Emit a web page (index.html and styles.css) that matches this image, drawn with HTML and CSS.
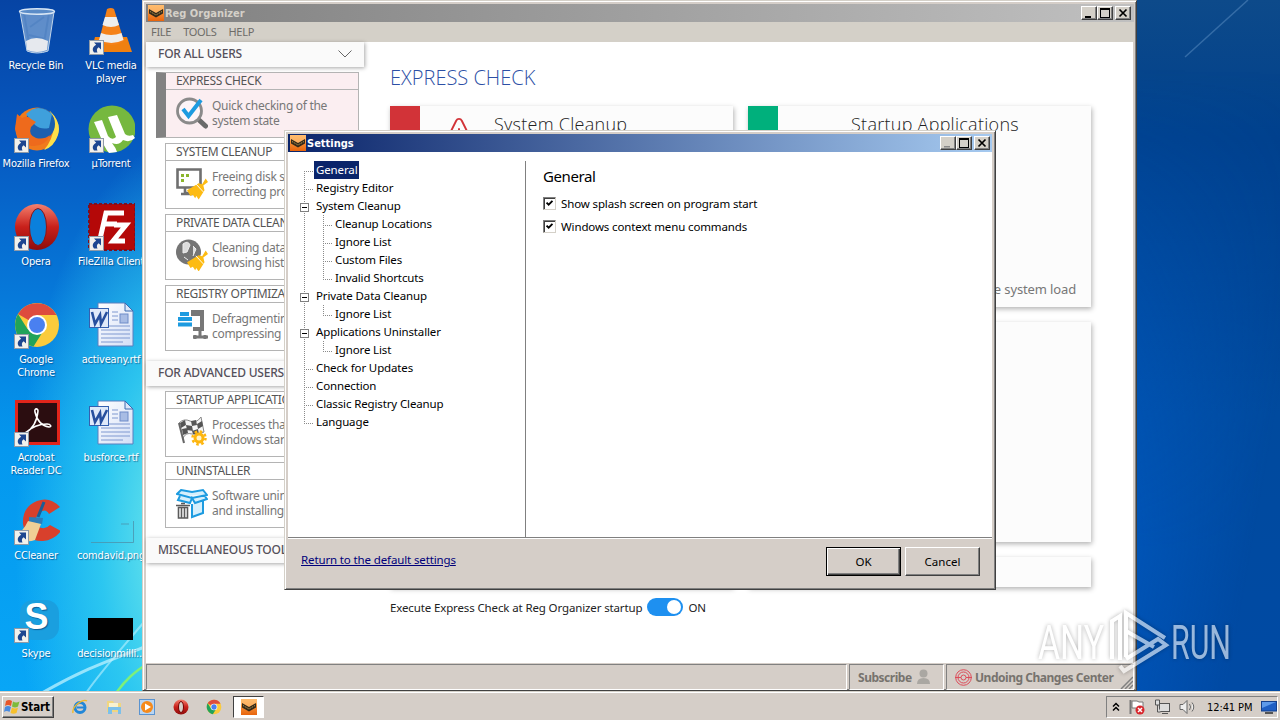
FILE: index.html
```html
<!DOCTYPE html>
<html lang="en">
<head>
    <meta charset="UTF-8">
    <meta name="viewport" content="width=device-width, initial-scale=1.0">
    <title>Reg Organizer</title>
    <link rel="stylesheet" href="styles.css">
</head>
<body>
    <!-- shared symbols -->
    <svg class="defs" width="0" height="0">
        <defs>
            <linearGradient id="orange" x1="0" y1="0" x2="0" y2="1">
                <stop offset="0" stop-color="#ffb45a"/><stop offset="1" stop-color="#e8640c"/>
            </linearGradient>
            <linearGradient id="redball" x1="0" y1="0" x2="0" y2="1">
                <stop offset="0" stop-color="#f4806e"/><stop offset=".5" stop-color="#c8201a"/><stop offset="1" stop-color="#8e0c0c"/>
            </linearGradient>
            <linearGradient id="page" x1="0" y1="0" x2="1" y2="1">
                <stop offset="0" stop-color="#fff"/><stop offset="1" stop-color="#d3def6"/>
            </linearGradient>
        </defs>
        <symbol id="shortcut" viewBox="0 0 15 15">
            <rect width="15" height="15" fill="#8f9aa8"/>
            <rect x="1" y="1" width="13" height="13" fill="#f2f1ec"/>
            <path d="M5 2.500h7v7l-2.300-2.200c-2 1.200-2.300 3-1.200 5.200H5C2.600 9.500 4 6.500 7.200 4.800z" fill="#1d4690"/>
        </symbol>
        <symbol id="app" viewBox="0 0 16 16">
            <rect width="16" height="16" fill="url(#orange)"/>
            <path d="M0 0h16v4L8 9 0 5z" fill="#ffc27a" opacity=".6"/>
            <path d="M1 4l7 4 7-4v4.500l-7 4-7-4z" fill="#33291a"/>
            <path d="M2 6.500l6 3.500 6-3.500" stroke="#d8b45a" stroke-width=".8" stroke-dasharray="1.500 1" fill="none"/>
        </symbol>
        <symbol id="chrome" viewBox="0 0 48 48">
            <circle cx="24" cy="24" r="22" fill="#fbcb3c"/>
            <path d="M24 24L5 13A22 22 0 0 1 43.500 14H24z" fill="#dd4b3e"/>
            <path d="M24 24l-9.500 4L5 13a22 22 0 0 0 15.500 32.600L29 32z" fill="#21a35a"/>
            <circle cx="24" cy="24" r="10" fill="#fff"/>
            <circle cx="24" cy="24" r="8" fill="#4a80f0"/>
        </symbol>
        <symbol id="word" viewBox="0 0 48 48">
            <path d="M11 2h27l8 8v35H11z" fill="url(#page)" stroke="#5b7fbe"/>
            <path d="M38 2v8h8z" fill="#dbe6f8" stroke="#3c6ab0"/>
            <path d="M25 11h6M25 15h6M25 19h6M14 25h29M14 29h29M14 33h29M14 37h29M14 41h22" stroke="#7e98d0"/>
            <rect x="33" y="13" width="8" height="9" fill="#a8bce4" stroke="#6f8cc8"/>
            <rect x="2.500" y="7.500" width="19" height="19" fill="#dfe9fa" stroke="#3560b0"/>
            <path d="M5 11l3 12 5-9 1 9 6-12" fill="none" stroke="#274f9e" stroke-width="2.600"/>
        </symbol>
        <symbol id="broom" viewBox="0 0 18 18">
            <path d="M16 0l2 3-4 3 1 4-5 8-2-3-1 2-2-3-2 1-3-5 10-6 3 1z" fill="#fdbb13"/>
            <path d="M7.500 4.500l6.500 7" stroke="#fff" stroke-width=".8"/>
        </symbol>
    </svg>

    <div class="desktop">
        <svg class="wallpaper" width="1280" height="692">
            <path d="M30 700C80 670 110 660 150 645" stroke="#bdf1ff" stroke-width="3" opacity=".75" fill="none"/>
            <path d="M84 696C100 672 112 660 150 615" stroke="#bdf1ff" stroke-width="2" opacity=".6" fill="none"/>
            <path d="M114 696C125 680 134 672 150 662" stroke="#7df07a" stroke-width="2.500" fill="none"/>
            <path d="M1185 57L1248 0" stroke="#5d8fc4" stroke-width="1.500" opacity=".5" fill="none"/>
        </svg>

        <div class="icons">
            <div class="icon">
                <svg viewBox="0 0 48 48">
                    <path d="M8 4h34l-6 40q-11 4-21 0z" fill="#8fb4dc" opacity=".65"/>
                    <path d="M12 6l5 30M37 6l-5 30M18 20l14-10M17 28l16 4" stroke="#4c7fc0" stroke-width="2" opacity=".6"/>
                    <path d="M14 34q10-6 22 0l-1 9q-10 4-20 0z" fill="#e6e9ee"/>
                    <ellipse cx="25" cy="4.500" rx="17.500" ry="2.800" fill="#5b8cc8" stroke="#d8e6f5" stroke-width="1.400"/>
                    <path d="M8 5l7 39q10 4 21 0l6-39" fill="none" stroke="#c3d6ea"/>
                </svg>
                <span>Recycle Bin</span>
            </div>
            <div class="icon">
                <svg viewBox="0 0 48 48">
                    <path d="M8 30h32l5 15H4z" fill="#f08010"/>
                    <path d="M20 2q4-2 7 0l10 32q-12 8-25 0z" fill="#f5821a"/>
                    <path d="M18 10h11.500l2.500 8q-8 4-16.500 0zM14 26q10 4 20.500 0l2 7q-12 6-24.500 0z" fill="#eee"/>
                    <use href="#shortcut" x="2" y="33" width="15" height="15"/>
                </svg>
                <span>VLC media player</span>
            </div>
            <div class="icon">
                <svg viewBox="0 0 48 48">
                    <circle cx="25" cy="24" r="21.500" fill="#f07a1c"/>
                    <path d="M38 6q12 12 8 24-4 12-14 15 10-12 9-24z" fill="#fde04a"/>
                    <ellipse cx="28" cy="19" rx="15" ry="16" fill="#1c5fae"/>
                    <path d="M14 9q12-12 26 0l-3 14q-8 2-14-3z" fill="#3fa0dc"/>
                    <path d="M3 24l2-15 5 4q6-3 9 1l5 3-5 5q-3 8 5 11 8 2 14-3-5 12-18 11T3 24z" fill="#ee6a1c"/>
                    <use href="#shortcut" x="2" y="33" width="15" height="15"/>
                </svg>
                <span>Mozilla Firefox</span>
            </div>
            <div class="icon">
                <svg viewBox="0 0 48 48">
                    <circle cx="25" cy="24" r="23.500" fill="#76b83f"/>
                    <path d="M7 17l8-2 6 16q4 5 8 1l-8-20 9-2 8 19q3 3 8 1l2 3q-5 5-12 2-4 6-11 3 4 5 5 9l-8 1q-5-6-8-15z" fill="#fff"/>
                    <use href="#shortcut" x="2" y="33" width="15" height="15"/>
                </svg>
                <span>µTorrent</span>
            </div>
            <div class="icon">
                <svg viewBox="0 0 48 48">
                    <ellipse cx="25" cy="24" rx="22" ry="23" fill="url(#redball)"/>
                    <ellipse cx="26" cy="24" rx="8.500" ry="18.500" fill="#0a80dc" stroke="#8e1414"/>
                    <use href="#shortcut" x="2" y="33" width="15" height="15"/>
                </svg>
                <span>Opera</span>
            </div>
            <div class="icon">
                <svg viewBox="0 0 48 48">
                    <rect x="2" y="1" width="46" height="46" fill="#b40808" stroke="#7c1020" stroke-width="2" stroke-dasharray="3 2"/>
                    <path d="M13 36l6-26h18M17 21h13M27 22h12L26 38h12" fill="none" stroke="#fff" stroke-width="5"/>
                    <use href="#shortcut" x="2" y="33" width="15" height="15"/>
                </svg>
                <span>FileZilla Client</span>
            </div>
            <div class="icon">
                <svg viewBox="0 0 48 48">
                    <use href="#chrome" x="1" y="0" width="48" height="48"/>
                    <use href="#shortcut" x="2" y="33" width="15" height="15"/>
                </svg>
                <span>Google Chrome</span>
            </div>
            <div class="icon">
                <svg viewBox="0 0 48 48"><use href="#word"/></svg>
                <span>activeany.rtf</span>
            </div>
            <div class="icon">
                <svg viewBox="0 0 48 48">
                    <rect x="4.500" y="2.500" width="42" height="42" fill="#2b0d10" stroke="#e1251b" stroke-width="3"/>
                    <path d="M13 34c8-4 12-12 13-22 0-3-4-3-3 1 2 8 6 14 14 15 3 0 2-3-2-3-7 0-14 2-22 9z" fill="none" stroke="#fff" stroke-width="1.600"/>
                    <use href="#shortcut" x="2" y="33" width="15" height="15"/>
                </svg>
                <span>Acrobat Reader DC</span>
            </div>
            <div class="icon">
                <svg viewBox="0 0 48 48"><use href="#word"/></svg>
                <span>busforce.rtf</span>
            </div>
            <div class="icon">
                <svg viewBox="0 0 48 48">
                    <path d="M48 10Q38-1 25 4 10 10 11 27q3 18 20 17 11-1 18-10l-11-6q-6 6-12 1-5-8 2-14 6-4 9 2z" fill="#d8402c"/>
                    <path d="M32 5L26 20" stroke="#1c5c94" stroke-width="3"/>
                    <path d="M17 20l14 1-1 6-13-2z" fill="#2d7cb8"/>
                    <path d="M16 24l13 3-6 16Q12 47 3 38q8-3 13-14z" fill="#f0cf96"/>
                    <use href="#shortcut" x="2" y="33" width="15" height="15"/>
                </svg>
                <span>CCleaner</span>
            </div>
            <div class="icon">
                <svg viewBox="0 0 48 48">
                    <path d="M4 45.500h42.500V24M34 27h8" fill="none" stroke="#4b93ac" opacity=".8"/>
                </svg>
                <span>comdavid.png</span>
            </div>
            <div class="icon">
                <svg viewBox="0 0 48 48">
                    <rect x="8" y="5" width="39" height="40" rx="13" fill="#1a9fdf"/>
                    <text class="skype" x="12.500" y="34">S</text>
                    <use href="#shortcut" x="2" y="33" width="15" height="15"/>
                </svg>
                <span>Skype</span>
            </div>
            <div class="icon">
                <svg viewBox="0 0 48 48"><rect x="1" y="23" width="45" height="22" fill="#000"/></svg>
                <span>decisionmilli...</span>
            </div>
        </div>

        <div class="window main-window">
            <div class="titlebar inactive">
                <svg class="app-icon" viewBox="0 0 16 16"><use href="#app"/></svg>
                <span class="title">Reg Organizer</span>
                <div class="controls">
                    <i><svg viewBox="0 0 14 12"><path d="M3 9h6v2H3z"/></svg></i>
                    <i><svg viewBox="0 0 14 12"><path d="M2 1h10v10H2zM3 3v7h8V3z" fill-rule="evenodd"/></svg></i>
                    <i class="close"><svg viewBox="0 0 14 12"><path d="M3.500 2.500l7 7M10.500 2.500l-7 7" stroke="#000" stroke-width="1.700"/></svg></i>
                </div>
            </div>
            <div class="menu"><span>FILE</span><span>TOOLS</span><span>HELP</span></div>

            <div class="main">
                <div class="sidebar">
                    <div class="group">FOR ALL USERS
                        <svg width="14" height="8" viewBox="0 0 14 8"><path d="M.5.500L7 7 13.500.500" fill="none" stroke="#666"/></svg>
                    </div>
                    <div class="tasks">
                        <div class="task selected">
                            <h3>EXPRESS CHECK</h3>
                            <div class="task-body">
                                <svg viewBox="0 0 32 32">
                                    <path d="M22.500 22.500l7 6.500" stroke="#6a6a6a" stroke-width="5" stroke-linecap="round"/>
                                    <circle cx="13.500" cy="14" r="12" fill="#fdf5f8" stroke="#8a8a8a" stroke-width="2.800"/>
                                    <path d="M7 12l5.500 7L25 3" fill="none" stroke="#1d9be0" stroke-width="4"/>
                                </svg>
                                <p>Quick checking of the<br>system state</p>
                            </div>
                        </div>
                        <div class="task">
                            <h3>SYSTEM CLEANUP</h3>
                            <div class="task-body">
                                <svg viewBox="0 0 32 32">
                                    <path d="M1.500 1.500h23v18h-23zM9 20v5h9v-5M5 26h12" fill="#fff" stroke="#6f6f6f" stroke-width="2.600"/>
                                    <path d="M5 6h3v3H5zM10 6h3v3h-3zM5 11h3v3H5z" fill="#8bb52c"/>
                                    <use href="#broom" x="11" y="10" width="21" height="22"/>
                                </svg>
                                <p>Freeing disk space,<br>correcting problems</p>
                            </div>
                        </div>
                        <div class="task">
                            <h3>PRIVATE DATA CLEANUP</h3>
                            <div class="task-body">
                                <svg viewBox="0 0 32 32">
                                    <circle cx="12.500" cy="13" r="12.500" fill="#757575"/>
                                    <path d="M7 5q5-4 7 1l-3 7-4 1zM17 7l3 3-3 7M8 18l4 3" fill="#ddd" stroke="#eee"/>
                                    <use href="#broom" x="11" y="11" width="21" height="22"/>
                                </svg>
                                <p>Cleaning data and<br>browsing history</p>
                            </div>
                        </div>
                        <div class="task">
                            <h3>REGISTRY OPTIMIZATION</h3>
                            <div class="task-body">
                                <svg viewBox="0 0 32 32">
                                    <path d="M15 4h11v15h-9" fill="none" stroke="#777" stroke-width="4"/>
                                    <path d="M15 1.500h13M24 19v8M17 27h15M19 25v4M29 25v4" stroke="#777" stroke-width="3"/>
                                    <path d="M4 4h9M2 9h14M2 14.500h14" stroke="#1d9be0" stroke-width="4"/>
                                </svg>
                                <p>Defragmenting and<br>compressing</p>
                            </div>
                        </div>
                    </div>
                    <div class="group">FOR ADVANCED USERS</div>
                    <div class="tasks">
                        <div class="task">
                            <h3>STARTUP APPLICATIONS</h3>
                            <div class="task-body">
                                <svg viewBox="0 0 32 32">
                                    <path d="M3 7Q8 2 14 5t11-4l3 15q-6 4-12 2t-9 4" fill="#f4f4f4" stroke="#8a8a8a"/>
                                    <path d="M4 7l5-3 1 5-5 3zM15 5l5-1 1 5-5 1zM10 9l6 1 1 5-6-1zM21 8l5-3 1 5-5 3zM6 13l5-1 1 5-5 2zM16 15l6-2 1 5-6 0z" fill="#555"/>
                                    <path d="M3 7l5 20" stroke="#666" stroke-width="2"/>
                                    <circle cx="23" cy="22" r="4" fill="#fff3c8" stroke="#fdb60f" stroke-width="3"/>
                                    <circle cx="23" cy="22" r="6.500" fill="none" stroke="#fdb60f" stroke-width="2.500" stroke-dasharray="2.500 2.600"/>
                                </svg>
                                <p>Processes that<br>Windows startup</p>
                            </div>
                        </div>
                        <div class="task">
                            <h3>UNINSTALLER</h3>
                            <div class="task-body">
                                <svg viewBox="0 0 32 32">
                                    <path d="M5 3l11 2 11-2 4 5-15 3L1 7zM4 9l-2 4 12 3 2-5 3 5 12-4-3-4M27 14v12l-11 4V17" fill="#d5effc" stroke="#1d9be0" stroke-width="2"/>
                                    <path d="M2.500 20.500h9V31h-9zM0 18.500h14M5 16.500h4M5.500 21v10M8.500 21v10" fill="#fff" stroke="#5a5a5a" stroke-width="1.600"/>
                                </svg>
                                <p>Software uninstalling<br>and installing</p>
                            </div>
                        </div>
                    </div>
                    <div class="group">MISCELLANEOUS TOOLS</div>
                </div>

                <div class="content">
                    <h1>EXPRESS CHECK</h1>
                    <div class="cards">
                        <div class="card">
                            <b class="corner red"></b>
                            <svg class="warn" viewBox="0 0 36 32"><path d="M18 2q2 0 3 2l12 24H3L15 4q1-2 3-2zM18 12v10" fill="none" stroke="#d23338" stroke-width="2"/></svg>
                            <h2>System Cleanup</h2>
                        </div>
                        <div class="card startup">
                            <b class="corner green"></b>
                            <h2>Startup Applications</h2>
                            <p>the system load</p>
                        </div>
                        <div class="card wide"></div>
                        <div class="card"></div>
                        <div class="card"></div>
                    </div>
                    <div class="autorun">
                        <span>Execute Express Check at Reg Organizer startup</span>
                        <span class="switch"><i></i></span>
                        <span>ON</span>
                    </div>
                </div>
            </div>

            <div class="statusbar">
                <div class="pane"></div>
                <div class="pane subscribe">Subscribe
                    <svg width="15" height="16" viewBox="0 0 15 16"><circle cx="7.500" cy="4.500" r="4" fill="#aaa7a2"/><path d="M1 15q0-6 6.500-6T14 15z" fill="#aaa7a2"/></svg>
                </div>
                <div class="pane undo">
                    <svg class="target" width="17" height="17" viewBox="0 0 17 17" fill="none" stroke="#dd4b59"><circle cx="8.500" cy="8.500" r="7.800"/><circle cx="8.500" cy="8.500" r="5.500"/><path d="M0 8.500h6M11 8.500h6"/><circle cx="8.500" cy="8.500" r="2.500"/></svg>
                    Undoing Changes Center
                    <svg class="grip" width="13" height="13" viewBox="0 0 13 13"><path d="M1 13L13 1M5 13l8-8M9 13l4-4" stroke="#808080" stroke-width="1.500"/></svg>
                </div>
            </div>
        </div>

        <div class="window dialog">
            <div class="titlebar">
                <svg class="app-icon" viewBox="0 0 16 16"><use href="#app"/></svg>
                <span class="title">Settings</span>
                <div class="controls">
                    <i><svg viewBox="0 0 14 12"><path d="M3 9h6v1.500H3z" fill="#888"/></svg></i>
                    <i><svg viewBox="0 0 14 12"><path d="M2 1h10v10H2zM3 3v7h8V3z" fill-rule="evenodd"/></svg></i>
                    <i class="close"><svg viewBox="0 0 14 12"><path d="M3.500 2.500l7 7M10.500 2.500l-7 7" stroke="#000" stroke-width="1.700"/></svg></i>
                </div>
            </div>
            <div class="dialog-body">
                <ul class="tree">
                    <li class="active"><span>General</span></li>
                    <li><span>Registry Editor</span></li>
                    <li class="branch"><span>System Cleanup</span></li>
                    <ul>
                        <li><span>Cleanup Locations</span></li>
                        <li><span>Ignore List</span></li>
                        <li><span>Custom Files</span></li>
                        <li><span>Invalid Shortcuts</span></li>
                    </ul>
                    <li class="branch"><span>Private Data Cleanup</span></li>
                    <ul>
                        <li><span>Ignore List</span></li>
                    </ul>
                    <li class="branch"><span>Applications Uninstaller</span></li>
                    <ul>
                        <li><span>Ignore List</span></li>
                    </ul>
                    <li><span>Check for Updates</span></li>
                    <li><span>Connection</span></li>
                    <li><span>Classic Registry Cleanup</span></li>
                    <li><span>Language</span></li>
                </ul>
                <div class="options">
                    <h2>General</h2>
                    <label><svg class="check" viewBox="0 0 13 13"><path d="M3 5.500l2.500 2.500L10 3.500" /></svg><span>Show splash screen on program start</span></label>
                    <label><svg class="check" viewBox="0 0 13 13"><path d="M3 5.500l2.500 2.500L10 3.500" /></svg><span>Windows context menu commands</span></label>
                </div>
            </div>
            <div class="dialog-footer">
                <a>Return to the default settings</a>
                <button class="default"><span>OK</span></button>
                <button><span>Cancel</span></button>
            </div>
        </div>

        <svg class="watermark" width="215" height="75" viewBox="0 0 215 75">
            <text x="3" y="54" textLength="66" lengthAdjust="spacingAndGlyphs">ANY</text>
            <g fill="none" stroke="#fff" stroke-width="4">
                <path d="M77 54V16l8-5v44"/>
                <path d="M91 52V8l39 25"/>
                <path d="M91 43V26l28 16M85 61l4 5 42-26-8-6-32 20"/>
            </g>
            <text x="136" y="54" textLength="60" lengthAdjust="spacingAndGlyphs">RUN</text>
        </svg>
    </div>

    <div class="taskbar">
        <div class="start">
            <svg viewBox="0 0 16 16">
                <path d="M2 2q3-2 6 0L7 7Q4 5 1 7z" fill="#e8562a"/><path d="M9 2.500q3 2 6.500 0L14 7.500q-3 2-6 0z" fill="#7dbb3c"/>
                <path d="M1 8q3-2 6 0l-1.500 5q-3-2-5.500 0z" fill="#4a8be0"/><path d="M8 8.500q3 2 6 0L12.500 14q-3 1.500-6 0z" fill="#f7c02c"/>
            </svg>Start
        </div>
        <div class="quick">
            <svg viewBox="0 0 16 16"><circle cx="8" cy="8.500" r="5" fill="none" stroke="#2287d8" stroke-width="3"/><path d="M5 8.500h9" stroke="#2287d8" stroke-width="2"/><path d="M1 14Q0 9 6 4.500T15 2" fill="none" stroke="#f0b92a" stroke-width="1.400"/></svg>
            <svg viewBox="0 0 16 16"><path d="M1 2h6l1 2h7v9H1z" fill="#f0d680"/><path d="M3 4h9v4H3z" fill="#f8f2d0"/><path d="M2 8h13v7h-3v-4H6v4H2z" fill="#7cc0ea"/></svg>
            <svg viewBox="0 0 16 16"><rect x=".5" y=".5" width="15" height="15" fill="#b9d5f2" stroke="#5a93d0"/><circle cx="8" cy="8" r="6" fill="#f58a1c"/><path d="M6 4.500l6 3.500-6 3.500z" fill="#fff"/></svg>
            <svg viewBox="0 0 16 16"><circle cx="8" cy="8" r="7.500" fill="url(#redball)"/><ellipse cx="8" cy="8" rx="2.500" ry="5.500" fill="#d6cfc8" stroke="#700"/></svg>
            <svg viewBox="0 0 16 16"><use href="#chrome"/></svg>
        </div>
        <div class="running"><svg viewBox="0 0 16 16"><use href="#app"/></svg></div>
        <div class="tray">
            <svg width="8" height="10" viewBox="0 0 8 10"><path d="M1 4.500l3-3 3 3M1 8.500l3-3 3 3" fill="none" stroke="#000" stroke-width="1.500"/></svg>
            <svg width="16" height="16" viewBox="0 0 16 16"><path d="M1.500 1v14" stroke="#777" stroke-width="2"/><path d="M3 2h5l2 1h4v7H8L7 9H3z" fill="#fff" stroke="#777"/><circle cx="11" cy="11" r="4.500" fill="#d8262c"/><path d="M9 9l4 4M13 9l-4 4" stroke="#fff" stroke-width="1.500"/></svg>
            <svg width="16" height="16" viewBox="0 0 16 16" fill="#ddd" stroke="#555"><rect x="5.500" y="4.500" width="10" height="8"/><path d="M8 14.500h6M1.500 1v5h4V1zM3.500 6v7h3"/></svg>
            <svg width="17" height="14" viewBox="0 0 17 14" fill="#eee" stroke="#666"><path d="M1 4.500h3l4-4v13l-4-4H1zM10.500 4q2 3 0 6M13 2.500q3.500 4.500 0 9" /></svg>
            <span class="clock">12:41 PM</span>
            <svg width="16" height="13" viewBox="0 0 16 13"><rect x=".5" y=".5" width="15" height="9.500" fill="#1f5fc4" stroke="#15408c"/><path d="M1 1h14L1 7z" fill="#5e9aea"/><path d="M4 12h8" stroke="#555" stroke-width="2"/></svg>
        </div>
    </div>
</body>
</html>
```

FILE: styles.css
```css
* {
    box-sizing: border-box;
}

body {
    display: flex;
    flex-direction: column;
    width: 1280px;
    height: 720px;
    margin: 0;
    overflow: hidden;
    font-family: "Noto Sans", "Open Sans", sans-serif;
    font-size: 11.5px;
    letter-spacing: -.13px;
    color: #000;
}

h1, h2, h3, p, ul {
    margin: 0;
    padding: 0;
    font-weight: normal;
}

.defs {
    position: absolute;
}

/* desktop */
.desktop {
    position: relative;
    height: 691px;
    overflow: hidden;
    background:
        linear-gradient(180deg, #0d4a8a 0, #00408c 20%, #004a9e 60%, #004aa4 100%) right / 144px 100% no-repeat,
        radial-gradient(ellipse 170px 400px at 185px 540px, #7ceeea 0, rgba(50, 205, 240, .85) 50%, rgba(10, 150, 235, 0) 100%),
        linear-gradient(180deg, #0644a4 0, #0658c0 20%, #067cdc 45%, #0498ee 65%, #08a6f6 100%);
}

.desktop::after {
    content: "";
    position: absolute;
    right: 0;
    top: 0;
    width: 144px;
    height: 100%;
    background: linear-gradient(100deg, rgba(0, 100, 215, .7), rgba(0, 60, 150, 0) 80%);
    -webkit-mask: linear-gradient(transparent 10%, #000 80%);
    z-index: 0;
}

.wallpaper {
    position: absolute;
    left: 0;
    top: 0;
}

.icons {
    position: relative;
    display: grid;
    grid-template-columns: 72px 78px;
    grid-auto-rows: 98px;
    width: 150px;
}

.icon {
    display: flex;
    flex-direction: column;
    align-items: center;
    padding-top: 7px;
    font-family: "DejaVu Sans Condensed", "DejaVu Sans", sans-serif;
    font-size: 11px;
    line-height: 13px;
    letter-spacing: -.2px;
    color: #fff;
    text-align: center;
    text-shadow: 1px 1px 1px rgba(0, 30, 80, .5);
}

.icon svg {
    width: 48px;
    height: 48px;
    flex: none;
    margin-bottom: 4px;
}

.skype {
    font: bold 36px "Liberation Sans", sans-serif;
    fill: #fff;
}

/* windows */
.window {
    position: absolute;
    display: flex;
    flex-direction: column;
    background: #d5cec8;
    border: 1px solid #d4d0c8;
    border-right-color: #404040;
    border-bottom-color: #404040;
    box-shadow: inset 1px 1px #fff, inset -1px -1px #808080;
    z-index: 1;
}

.main-window {
    left: 142px;
    top: 0;
    width: 995px;
    height: 691px;
    padding: 3px 2px 0 3px;
}

.titlebar {
    display: flex;
    align-items: center;
    flex: none;
    height: 18px;
    padding-right: 2px;
    background: linear-gradient(90deg, #0a246a, #a6caf0);
    color: #fff;
}

.titlebar.inactive {
    padding-right: 3px;
    background: linear-gradient(90deg, #808080, #c0c0c0);
    color: #d4d0c8;
}

.app-icon {
    width: 16px;
    height: 16px;
    margin: 0 1px 0 2px;
}

.title {
    flex: 1;
    font: bold 11px "DejaVu Sans Condensed", sans-serif;
    letter-spacing: 0;
}

.controls {
    display: flex;
}

.controls i {
    width: 16px;
    height: 14px;
    background: #d4d0c8;
    border: 1px solid #fff;
    border-right-color: #404040;
    border-bottom-color: #404040;
    box-shadow: inset -1px -1px #808080;
}

.controls svg {
    display: block;
    width: 14px;
    height: 12px;
}

.controls .close {
    margin-left: 2px;
}

.menu {
    display: flex;
    gap: 12px;
    flex: none;
    height: 20px;
    padding-left: 5px;
    background: #d4d0c8;
    line-height: 20px;
    font-size: 11px;
    letter-spacing: -.3px;
    color: #6e6c68;
}

.main {
    display: flex;
    width: 987px;
    height: 621px;
    background: #fff;
}

/* sidebar */
.sidebar {
    width: 220px;
}

.group {
    display: flex;
    align-items: center;
    justify-content: space-between;
    width: 218px;
    height: 25px;
    padding: 0 12px 2px 12px;
    background: #fafafa;
    box-shadow: 1px 1px 4px rgba(0, 0, 0, .35);
    font-size: 12px;
    font-weight: 500;
    letter-spacing: -.2px;
    color: #55505a;
    white-space: nowrap;
}

.tasks {
    display: grid;
    gap: 5px;
    padding: 5px 0 10px 19px;
}

.task {
    width: 194px;
    height: 66px;
    border: 1px solid #b4b4b4;
    background: #fff;
}

.task.selected {
    width: 203px;
    margin-left: -9px;
    border-left: 10px solid #828282;
    background: #fbeef1;
}

.task h3 {
    height: 17px;
    padding-left: 10px;
    border-bottom: 1px solid #b4b4b4;
    font-size: 12px;
    line-height: 16px;
    letter-spacing: -.33px;
    color: #555;
    white-space: nowrap;
}

.task-body {
    display: flex;
    align-items: center;
    height: 46px;
    padding-left: 10px;
    overflow: hidden;
}

.task-body svg {
    flex: none;
    width: 32px;
    height: 32px;
    margin-right: 4px;
}

.task-body p {
    font-size: 12px;
    line-height: 15px;
    letter-spacing: -.3px;
    color: #777;
    white-space: nowrap;
}

/* express check page */
.content {
    flex: 1;
    padding: 22px 42px 0 24px;
}

.content h1 {
    height: 26px;
    font-family: "Open Sans", sans-serif;
    font-size: 20px;
    font-weight: 300;
    line-height: 27px;
    letter-spacing: 0;
    color: #2c4fa5;
}

.cards {
    display: grid;
    grid-template-columns: 343px 343px;
    grid-template-rows: 201px 220px 30px;
    gap: 15px;
    margin-top: 16px;
}

.card {
    display: flex;
    position: relative;
    background: #fcfcfc;
    box-shadow: 1px 2px 5px rgba(0, 0, 0, .3);
}

.card.wide {
    grid-column: span 2;
}

.card h2 {
    padding-top: 3px;
    font-family: "Open Sans", sans-serif;
    font-size: 18px;
    font-weight: 300;
    line-height: 30px;
    letter-spacing: .27px;
    color: #222;
}

.corner {
    width: 30px;
    height: 30px;
}

.red {
    background: #d23338;
}

.green {
    background: #00b07c;
}

.warn {
    width: 34px;
    height: 30px;
    margin: 11px 18px 0 22px;
}

.startup h2 {
    margin-left: 73px;
}

.startup p {
    position: absolute;
    right: 15px;
    bottom: 9px;
    font-size: 13px;
    color: #777;
}

.autorun {
    display: flex;
    align-items: center;
    gap: 5px;
    height: 20px;
    margin-top: 10px;
    color: #222;
}

.switch {
    width: 36px;
    height: 18px;
    padding: 2px;
    border-radius: 9px;
    background: #1e90f0;
}

.switch i {
    display: block;
    width: 14px;
    height: 14px;
    margin-left: 18px;
    border-radius: 50%;
    background: #fff;
}

.statusbar {
    display: flex;
    gap: 2px;
    height: 26px;
    margin-top: 1px;
    font: bold 12px "Noto Sans", sans-serif;
    letter-spacing: -.48px;
    color: #77736e;
}

.pane {
    display: flex;
    align-items: center;
    flex: 1;
    border: 1px solid #808080;
    border-right-color: #fff;
    border-bottom-color: #fff;
}

.subscribe {
    flex: none;
    width: 95px;
    padding-left: 8px;
    gap: 4px;
}

.undo {
    flex: none;
    width: 188px;
    padding-left: 8px;
    gap: 3px;
    white-space: nowrap;
}

.target {
    flex: none;
}

.grip {
    align-self: flex-end;
    margin-left: auto;
}

/* settings dialog */
.dialog {
    left: 284px;
    top: 130px;
    width: 712px;
    height: 460px;
    padding: 3px;
}

.dialog-body {
    display: flex;
    height: 386px;
    padding-top: 9px;
    background: #fff;
    border-bottom: 1px solid #808080;
}

.tree {
    width: 238px;
    padding-left: 16px;
    border-right: 1px solid #808080;
    background: repeating-linear-gradient(#8a8a8a 0 1px, transparent 1px 2px) 16px 10px / 1px 252px no-repeat;
    list-style: none;
    white-space: nowrap;
}

.tree ul {
    padding-left: 0;
    margin-left: 19px;
    background: repeating-linear-gradient(#8a8a8a 0 1px, transparent 1px 2px) 0 0 / 1px calc(100% - 8px) no-repeat;
    list-style: none;
}

.tree li {
    display: flex;
    align-items: center;
    height: 18px;
}

.tree li::before {
    content: "";
    width: 10px;
    height: 1px;
    margin-top: 2px;
    background: repeating-linear-gradient(90deg, #8a8a8a 0 1px, transparent 1px 2px);
}

.tree li.branch::before {
    width: 7px;
    height: 7px;
    margin: 3px 5px 0 -4px;
    border: 1px solid #808080;
    background: linear-gradient(#000, #000) center / 5px 1px no-repeat #fff;
}

.tree span {
    height: 18px;
    padding: 0 2px;
    line-height: 17px;
}

.tree .active span {
    background: #0a246a;
    color: #fff;
}

.options {
    padding: 5px 0 0 17px;
}

.options h2 {
    margin-bottom: 5px;
    font-size: 15px;
    line-height: 21px;
    letter-spacing: -.4px;
}

.options label {
    display: flex;
    align-items: center;
    gap: 5px;
    height: 23px;
}

.check {
    width: 13px;
    height: 13px;
    border: 1px solid #808080;
    border-right-color: #d4d0c8;
    border-bottom-color: #d4d0c8;
    box-shadow: inset 1px 1px #404040;
    fill: none;
    stroke: #000;
    stroke-width: 2.2;
}

.dialog-footer {
    display: flex;
    gap: 4px;
    padding: 8px 12px 0 13px;
    border-top: 1px solid #fff;
}

.dialog-footer a {
    margin-right: auto;
    line-height: 26px;
    color: #00007a;
    text-decoration: underline;
}

.dialog-footer button {
    width: 75px;
    height: 29px;
    padding: 0;
    border: 1px solid #fff;
    border-right-color: #404040;
    border-bottom-color: #404040;
    background: #d5cec8;
    box-shadow: inset -1px -1px #808080;
    font: 11.5px "Noto Sans", sans-serif;
}

.dialog-footer .default {
    border-color: #000;
    box-shadow: inset 1px 1px #fff, inset -1px -1px #404040, inset -2px -2px #808080;
}

.watermark {
    position: absolute;
    left: 1035px;
    top: 605px;
    z-index: 2;
    opacity: .6;
    filter: drop-shadow(0 0 2px rgba(0, 0, 0, .5));
}

.watermark text {
    font: 48px Roboto, sans-serif;
    letter-spacing: 0;
    fill: #fff;
}

/* taskbar */
.taskbar {
    display: flex;
    align-items: center;
    height: 29px;
    padding: 3px 2px 0 2px;
    background: #d5cec8;
    box-shadow: inset 0 1px #d4d0c8, inset 0 2px #fff;
}

.start {
    display: flex;
    align-items: center;
    gap: 1px;
    width: 52px;
    height: 22px;
    padding-left: 1px;
    border: 1px solid #fff;
    border-right-color: #404040;
    border-bottom-color: #404040;
    box-shadow: inset -1px -1px #808080;
    font: bold 11.5px "DejaVu Sans Condensed", sans-serif;
    letter-spacing: -.1px;
}

.taskbar svg {
    flex: none;
}

.start svg, .quick svg, .running svg {
    width: 16px;
    height: 16px;
}

.quick {
    display: flex;
    gap: 17.6px;
    margin-left: 18px;
}

.running {
    display: flex;
    align-items: center;
    justify-content: center;
    width: 31px;
    height: 22px;
    margin-left: 11px;
    border: 1px solid #404040;
    border-right-color: #fff;
    border-bottom-color: #fff;
    background: #fff;
}

.tray {
    display: flex;
    align-items: center;
    gap: 9px;
    width: 172px;
    height: 22px;
    margin-left: auto;
    padding-left: 5px;
    border: 1px solid #808080;
    border-right-color: #fff;
    border-bottom-color: #fff;
}

.clock {
    margin-left: 2px;
    font: 11px "DejaVu Sans Condensed", sans-serif;
    letter-spacing: -.1px;
    white-space: nowrap;
}
```
